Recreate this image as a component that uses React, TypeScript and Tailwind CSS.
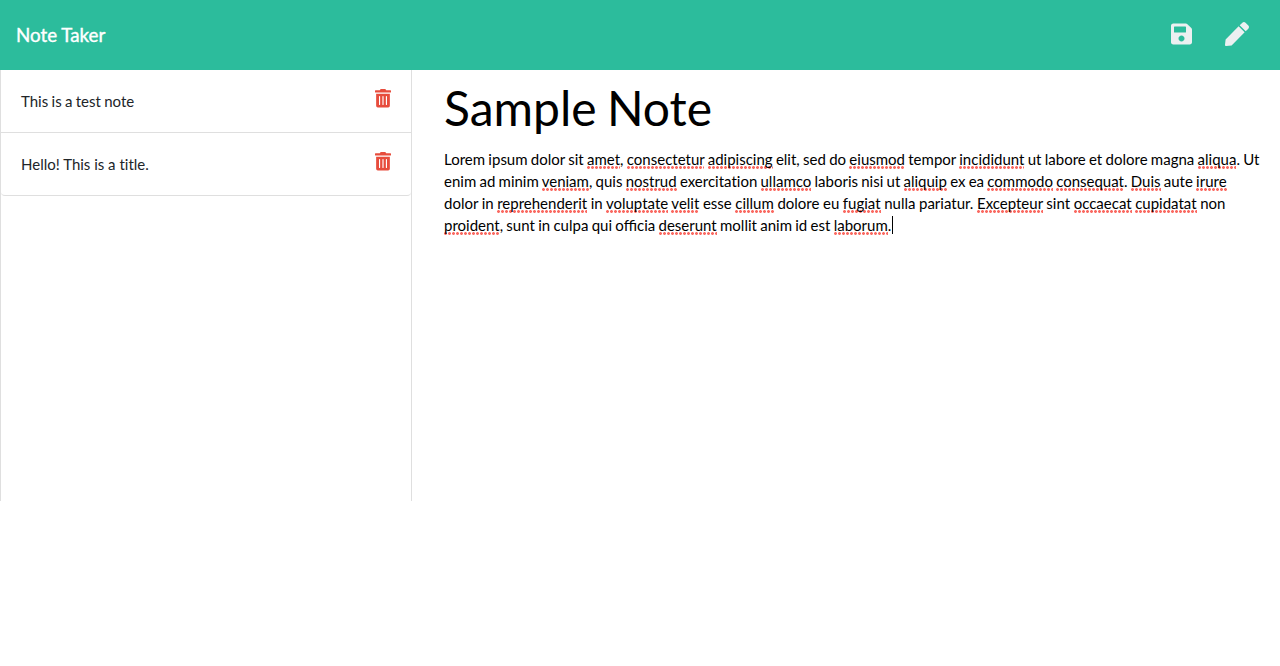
import React from "react";
import { FaSave, FaPen, FaTrashAlt } from "react-icons/fa";

const M = ({ children }: { children: React.ReactNode }) => (
  <span className="bg-[radial-gradient(circle_at_1.5px_1.5px,#fa6a62_1px,transparent_1.8px)] bg-[length:4px_3px] bg-[position:0_100%] bg-repeat-x pb-px">{children}</span>
);

const Note = ({ title }: { title: string }) => (
  <div className="flex h-[63px] justify-between border-b border-[#dfdfdf] px-5 pt-5 last:rounded-b">
    <span>{title}</span>
    <FaTrashAlt className="-mt-px h-[18.5px] w-4 text-[#e74c3c]" />
  </div>
);

export default function App() {
  return (
    <div className="h-[666px] bg-white font-['Lato',sans-serif] text-[15px] [font-variant-ligatures:none]">
      <header className="flex h-[70px] items-center justify-between bg-[#2cbc9c] pr-[31px] pl-4">
        <span className="text-[18.75px] text-white [-webkit-text-stroke:0.4px_white]">Note Taker</span>
        <div className="flex items-center gap-[33px] pb-0.5 text-[#ecf0f1]">
          <FaSave className="h-6 w-[21px]" />
          <FaPen className="h-6 w-6" />
        </div>
      </header>
      <div className="flex">
        <aside className="h-[431px] w-[412px] border-x border-[#dfdfdf] text-[#212529]">
          <div className="[word-spacing:-0.5px]">
            <Note title="This is a test note" />
            <div className="[word-spacing:0px]">
              <Note title="Hello! This is a title." />
            </div>
          </div>
        </aside>
        <main className="w-[868px] pt-[11px] pl-8 text-black">
          <h1 className="text-[48px] leading-[54px] [word-spacing:-2px]">Sample Note</h1>
          <p className="mt-[13px] leading-[22px] whitespace-nowrap [word-spacing:-0.54px]">
            Lorem ipsum dolor sit <M>amet</M>, <M>consectetur</M> <M>adipiscing</M> elit, sed do <M>eiusmod</M> tempor <M>incididunt</M> ut labore et dolore magna <M>aliqua</M>. Ut<br />
            <span className="[word-spacing:-0.6px]">
              enim ad minim <M>veniam</M>, quis <M>nostrud</M> exercitation <M>ullamco</M> laboris nisi ut <M>aliquip</M> ex ea <M>commodo</M> <M>consequat</M>. <M>Duis</M> aute <M>irure</M>
            </span><br />
            <span className="[word-spacing:-0.28px]">
              dolor in <M>reprehenderit</M> in <M>voluptate</M> <M>velit</M> esse <M>cillum</M> dolore eu <M>fugiat</M> nulla pariatur. <M>Excepteur</M> sint <M>occaecat</M> <M>cupidatat</M> non
            </span><br />
            <M>proident</M>, sunt in culpa qui <span className="[font-variant-ligatures:common-ligatures]">officia</span> <M>deserunt</M> mollit anim id est <M>laborum</M>.
            <span className="ml-px inline-block h-[18px] w-px bg-black align-[-3px]" />
          </p>
        </main>
      </div>
    </div>
  );
}
